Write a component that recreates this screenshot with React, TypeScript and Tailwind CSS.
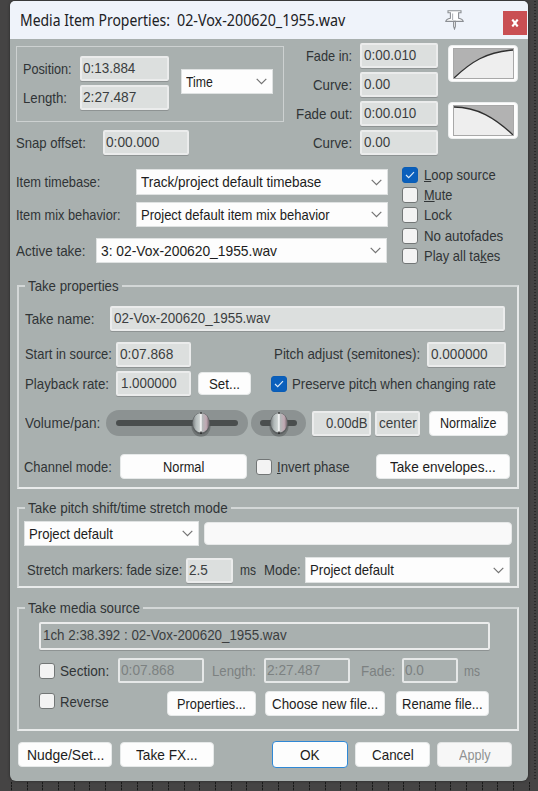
import { useLayoutEffect, useRef, useState } from "react";
import type { ReactNode } from "react";
import clsx from "clsx";

type TextProps = { w: number; children: ReactNode; className?: string };

// Condensed UI text: squeezed horizontally so that it fills exactly w pixels
function Text({ w, children, className }: TextProps) {
  const ref = useRef<HTMLSpanElement>(null);
  const [scale, setScale] = useState(1);

  useLayoutEffect(() => {
    if (ref.current) setScale(w / ref.current.offsetWidth);
  }, [w]);

  return (
    <span className={clsx("block shrink-0 whitespace-nowrap", className)} style={{ width: w }}>
      <span ref={ref} className="inline-block origin-left" style={{ transform: `scaleX(${scale})` }}>
        {children}
      </span>
    </span>
  );
}

type FieldProps = { value: string; w: number; className: string; disabled?: boolean; clear?: boolean };

function Field({ value, w, className, disabled, clear }: FieldProps) {
  return (
    <div
      className={clsx(
        "flex shrink-0 items-center rounded-[2px] border-2",
        disabled ? "border-[#e6e8e8] text-[#7c8181]" : "border-[#ebecec] text-[#3b3e40] shadow-[0_1px_0_#8e9393]",
        disabled || clear ? "bg-[#a9b0af]" : "bg-[#dcdfde]",
        className
      )}
    >
      <Text w={w} className="-mt-[1px]">{value}</Text>
    </div>
  );
}

function Select({ value, w, className }: { value: string; w: number; className: string }) {
  return (
    <div className={clsx("flex shrink-0 items-center justify-between border border-[#dfe2e2] bg-[#fdfdfd] pl-1 pr-[5px] text-[#1c1c20]", className)}>
      <Text w={w}>{value}</Text>
      <svg width="11" height="7" viewBox="0 0 11 7" fill="none" stroke="#737373" strokeWidth="1.2">
        <path d="M0.7 0.8 L5.5 5.6 L10.3 0.8" />
      </svg>
    </div>
  );
}

const plain = "border-[#e6e9e9] bg-[#fdfdfd] text-[#1c1c20]";

function Button({ label, w, className }: { label: string; w: number; className: string }) {
  return (
    <button className={clsx("flex h-[25px] shrink-0 items-center justify-center rounded-[4px] border", className)}>
      <Text w={w}>{label}</Text>
    </button>
  );
}

function Check({ checked, className }: { checked?: boolean; className?: string }) {
  return (
    <span
      className={clsx(
        "flex size-4 shrink-0 items-center justify-center rounded-[3px] border",
        checked ? "border-[#0a5cb5] bg-[#0a5fbc]" : "border-[#727676] bg-[#f3f3f3]",
        className
      )}
    >
      {checked && (
        <svg width="10" height="8" viewBox="0 0 10 8" fill="none" stroke="#dceaf8" strokeWidth="1.2">
          <path d="M1 4 L3.7 6.6 L9 1.2" />
        </svg>
      )}
    </span>
  );
}

function Group({ title, w, className, children }: { title: string; w: number; className: string; children: ReactNode }) {
  return (
    <fieldset className={clsx("ml-[7px] w-[502px] min-w-0 border-2 border-[#d3d7d7] border-r-[#e6e8e8] border-b-[#e9ebeb]", className)}>
      <legend className="ml-[6px] h-4 px-[3px] leading-4">
        <Text w={w}>{title}</Text>
      </legend>
      {children}
    </fieldset>
  );
}

function Knob({ className }: { className: string }) {
  return (
    <svg className={clsx("absolute top-[1px]", className)} width="22" height="27" viewBox="0 0 22 27">
      <defs>
        <linearGradient id="chrome" x1="0" x2="1">
          <stop offset="0" stopColor="#7d8283" />
          <stop offset="0.2" stopColor="#b3baba" />
          <stop offset="0.4" stopColor="#c9cfce" />
          <stop offset="0.5" stopColor="#ffffff" />
          <stop offset="0.58" stopColor="#b3b7b8" />
          <stop offset="0.82" stopColor="#c0a9b3" />
          <stop offset="1" stopColor="#75696f" />
        </linearGradient>
      </defs>
      <ellipse cx="11" cy="14.5" rx="9.8" ry="11.2" fill="#4c5050" opacity="0.45" />
      <ellipse cx="11" cy="12.5" rx="9" ry="10.8" fill="#5c6061" />
      <ellipse cx="11" cy="11.8" rx="8.2" ry="9.8" fill="url(#chrome)" />
      <path d="M11 1.2v1.8M11 20.5v2.5" stroke="#181818" strokeWidth="1.2" />
    </svg>
  );
}

function FadeCurve({ area, line }: { area: string; line: string }) {
  return (
    <div className="flex h-[37px] w-[70px] items-center justify-center rounded-[4px] border border-[#eceeee] bg-[#fdfdfd]">
      <svg width="61" height="31" viewBox="0 0 61 31">
        <rect x="0.5" y="0.5" width="60" height="30" fill="#b2b2b2" stroke="#a0a0a0" />
        <path d={area} fill="#eeeeee" />
        <path d={line} fill="none" stroke="#303030" strokeWidth="1.3" />
        <rect x="0.5" y="0.5" width="60" height="30" fill="none" stroke="#a8a8a8" />
      </svg>
    </div>
  );
}

function TitleBar() {
  return (
    <div className="flex h-[38px] items-center bg-[#eff3fa] pl-[10px] font-['Noto_Sans'] text-[16px] text-[#202124]">
      <Text w={150}>Media Item Properties:</Text>
      <Text w={168} className="ml-[7px]">02-Vox-200620_1955.wav</Text>
      <svg className="-mt-[1px] ml-[100px]" width="19" height="20" viewBox="0 0 19 20" fill="#fff" stroke="#8b8e93" strokeWidth="1.1">
        <path d="M3 0.7H16V2.8H13.6V8.2C15.8 8.6 17.8 9.5 18.2 11.4H0.8C1.2 9.5 3.2 8.6 5.4 8.2V2.8H3Z" />
        <path d="M8.6 11.4H10.4V16.5L9.5 19L8.6 16.5Z" />
        <path d="M7.6 3.4V10" stroke="#b0b3b8" />
      </svg>
      <div className="ml-auto mr-[1px] mt-[5px] flex size-6 items-center justify-center bg-[#c94f53]">
        <svg width="8" height="8" viewBox="0 0 8 8" stroke="#fff" strokeWidth="2.1">
          <path d="M1.3 0.5L6.7 7.5M6.7 0.5L1.3 7.5" />
        </svg>
      </div>
    </div>
  );
}

function FadeRow({ label, lw, value, vw, className }: { label: string; lw: number; value: string; vw: number; className?: string }) {
  return (
    <div className={clsx("flex items-center justify-end gap-2", className)}>
      <Text w={lw}>{label}</Text>
      <Field value={value} w={vw} className="h-[25px] w-[78px] pl-[2px]" />
    </div>
  );
}

function TopSection() {
  return (
    <div className="flex h-[130px] pt-[5px]">
      <div className="ml-[6px] w-[268px] shrink-0">
        <div className="mt-[2px] flex h-[76px] border border-[#cdd1d1] pl-[6px]">
          <div className="pt-[9px]">
            <div className="flex h-[25px] items-center">
              <Text w={49}>Position:</Text>
              <Field value="0:13.884" w={52} className="ml-2 h-[25px] w-[89px] pl-[1px]" />
            </div>
            <div className="mt-1 flex h-[25px] items-center">
              <Text w={44}>Length:</Text>
              <Field value="2:27.487" w={53} className="ml-[13px] h-[25px] w-[89px] pl-[1px]" />
            </div>
          </div>
          <Select value="Time" w={27} className="ml-3 mt-[22px] h-[25px] w-[92px]" />
        </div>
        <div className="mt-2 flex items-center">
          <Text w={70}>Snap offset:</Text>
          <Field value="0:00.000" w={53} className="ml-[17px] h-[25px] w-[86px] pl-[1px]" />
        </div>
      </div>
      <div className="-mt-[1px] w-[154px] shrink-0">
        <FadeRow label="Fade in:" lw={46} value="0:00.010" vw={52} />
        <FadeRow label="Curve:" lw={39} value="0.00" vw={26} className="mt-1" />
        <FadeRow label="Fade out:" lw={56} value="0:00.010" vw={52} className="mt-1" />
        <FadeRow label="Curve:" lw={39} value="0.00" vw={26} className="mt-1" />
      </div>
      <div className="ml-[10px] mt-[1px] flex flex-col gap-5">
        <FadeCurve area="M1 30C18 14 33 4 60 2V30Z" line="M1 30C18 14 33 4 60 2" />
        <FadeCurve area="M1 2C24 2 42 13 60 30H1Z" line="M1 2C24 2 42 13 60 30" />
      </div>
    </div>
  );
}

function ItemSection() {
  return (
    <div className="flex h-[109px]">
      <div className="ml-[6px] w-[372px]">
        <div className="flex items-center">
          <Text w={84}>Item timebase:</Text>
          <Select value="Track/project default timebase" w={180} className="ml-9 h-[26px] w-[252px]" />
        </div>
        <div className="mt-[7px] flex items-center">
          <Text w={105}>Item mix behavior:</Text>
          <Select value="Project default item mix behavior" w={189} className="ml-[15px] h-[25px] w-[252px]" />
        </div>
        <div className="mt-[11px] flex items-center">
          <Text w={70}>Active take:</Text>
          <Select value="3: 02-Vox-200620_1955.wav" w={176} className="ml-[10px] h-[25px] w-[291px]" />
        </div>
      </div>
      <div className="-mt-[4px] ml-[14px]">
        <div className="flex h-5 items-center gap-[6px]">
          <Check checked />
          <Text w={72}><u>L</u>oop source</Text>
        </div>
        <div className="flex h-5 items-center gap-[6px]">
          <Check />
          <Text w={28}><u>M</u>ute</Text>
        </div>
        <div className="flex h-5 items-center gap-[6px]">
          <Check />
          <Text w={28}>Lock</Text>
        </div>
        <div className="mt-[1px] flex h-5 items-center gap-[6px]">
          <Check />
          <Text w={79}>No autofades</Text>
        </div>
        <div className="flex h-5 items-center gap-[6px]">
          <Check />
          <Text w={76}>Play all ta<u>k</u>es</Text>
        </div>
      </div>
    </div>
  );
}

function TakeProperties() {
  return (
    <Group title="Take properties" w={91} className="h-[211px]">
      <div className="ml-[6px] mt-[12px] flex items-center">
        <Text w={70}>Take name:</Text>
        <Field value="02-Vox-200620_1955.wav" w={156} className="ml-[15px] h-[25px] w-[395px] pl-[2px]" />
      </div>
      <div className="ml-[6px] mt-[10px] flex items-center">
        <Text w={87}>Start in source:</Text>
        <Field value="0:07.868" w={53} className="ml-1 h-[25px] w-[75px] pl-[2px]" />
        <Text w={146} className="ml-[83px]">Pitch adjust (semitones):</Text>
        <Field value="0.000000" w={57} className="ml-[7px] mt-[1px] h-[25px] w-[79px] pl-[2px]" />
      </div>
      <div className="ml-[6px] mt-1 flex items-center">
        <Text w={84}>Playback rate:</Text>
        <Field value="1.000000" w={56} className="ml-[7px] h-[25px] w-[75px] pl-[3px]" />
        <Button label="Set..." w={31} className={clsx(plain, "ml-[7px] !h-[23px] w-[53px]")} />
        <Check checked className="ml-[20px]" />
        <Text w={204} className="ml-[5px]">Preserve pitc<u>h</u> when changing rate</Text>
      </div>
      <div className="ml-[6px] mt-[14px] flex items-center">
        <Text w={75}>Volume/pan:</Text>
        <div className="relative ml-[6px] h-[26px] w-[142px] rounded-full bg-[#8c9292] px-[10px] pt-[10px]">
          <div className="h-[6px] rounded-full bg-[#4a4e4e]" />
          <Knob className="left-[84px]" />
        </div>
        <div className="relative ml-[3px] h-[26px] w-[55px] rounded-full bg-[#8c9292] px-[9px] pt-[10px]">
          <div className="h-[6px] rounded-full bg-[#4a4e4e]" />
          <Knob className="left-[17px]" />
        </div>
        <Field value="0.00dB" w={42} className="ml-[6px] h-[25px] w-[59px] justify-end pr-[1px]" />
        <Field value="center" w={38} className="ml-1 h-[25px] w-[45px] justify-center" />
        <Button label="Normalize" w={57} className={clsx(plain, "ml-[9px] w-[79px]")} />
      </div>
      <div className="ml-[5px] mt-[18px] flex items-center">
        <Text w={88}>Channel mode:</Text>
        <Button label="Normal" w={41} className={clsx(plain, "ml-[8px] w-[127px]")} />
        <Check className="ml-[9px]" />
        <Text w={73} className="ml-[5px]"><u>I</u>nvert phase</Text>
        <Button label="Take envelopes..." w={106} className={clsx(plain, "ml-[26px] w-[134px]")} />
      </div>
    </Group>
  );
}

function StretchMode() {
  return (
    <Group title="Take pitch shift/time stretch mode" w={200} className="mt-[11px] h-[88px]">
      <div className="ml-[5px] mt-[5px] flex items-center">
        <Select value="Project default" w={84} className="h-[25px] w-[175px]" />
        <div className="ml-[5px] h-[23px] w-[308px] rounded-[4px] border border-[#e6e8e8] bg-[#f9f9f9]" />
      </div>
      <div className="ml-[8px] mt-[11px] flex items-center">
        <Text w={155}>Stretch markers: fade size:</Text>
        <Field value="2.5" w={19} className="ml-1 h-[25px] w-[47px] pl-[1px]" />
        <Text w={16} className="ml-[7px]">ms</Text>
        <Text w={37} className="ml-2">Mode:</Text>
        <Select value="Project default" w={84} className="ml-1 h-[26px] w-[205px]" />
      </div>
    </Group>
  );
}

function MediaSource() {
  return (
    <Group title="Take media source" w={112} className="mt-[12px] h-[131px]">
      <Field value="1ch 2:38.392 : 02-Vox-200620_1955.wav" w={244} clear className="ml-5 mt-[6px] h-[28px] w-[451px] pb-[2px] pl-[2px]" />
      <div className="ml-5 mt-2 flex items-center">
        <Check />
        <Text w={49} className="ml-[5px]">Section:</Text>
        <Field value="0:07.868" w={53} disabled className="ml-[9px] h-[25px] w-[86px] pl-[1px]" />
        <Text w={44} className="ml-2 text-[#7c8181]">Length:</Text>
        <Field value="2:27.487" w={53} disabled className="ml-[8px] h-[25px] w-[86px] pl-[1px]" />
        <Text w={34} className="ml-[11px] text-[#7c8181]">Fade:</Text>
        <Field value="0.0" w={19} disabled className="ml-[7px] h-[25px] w-[56px] pl-[1px]" />
        <Text w={16} className="ml-[6px] text-[#7c8181]">ms</Text>
      </div>
      <div className="ml-5 mt-2 flex">
        <Check className="mt-[2px]" />
        <Text w={49} className="ml-[5px] mt-[2px]">Reverse</Text>
        <Button label="Properties..." w={69} className={clsx(plain, "ml-[58px] w-[89px]")} />
        <Button label="Choose new file..." w={106} className={clsx(plain, "ml-[9px] w-[120px]")} />
        <Button label="Rename file..." w={81} className={clsx(plain, "ml-[11px] w-[93px]")} />
      </div>
    </Group>
  );
}

function Footer() {
  return (
    <div className="mt-[11px] flex pl-2">
      <Button label="Nudge/Set..." w={77} className={clsx(plain, "w-[94px]")} />
      <Button label="Take FX..." w={62} className={clsx(plain, "ml-2 w-[94px]")} />
      <Button label="OK" w={20} className="-mt-[1px] ml-[58px] !h-[27px] w-[76px] border-[#2f88d6] bg-[#fdfdfd] text-[#1c1c20]" />
      <Button label="Cancel" w={42} className={clsx(plain, "ml-[7px] w-[75px]")} />
      <Button label="Apply" w={32} className="ml-[7px] w-[75px] border-[#e2e4e4] bg-[#f7f7f7] text-[#8f9292]" />
    </div>
  );
}

export default function App() {
  return (
    <div className="flex h-[791px] w-[538px] flex-col overflow-hidden bg-[#454444] pl-[10px] pt-[1px]">
      <div className="flex">
        <div className="h-[780px] w-[518px] shrink-0 overflow-hidden rounded-t-[5px] rounded-b-[6px] bg-[#a9b0af] font-['Liberation_Sans'] text-[15px] leading-[18px] text-[#303436] shadow-[0_0_3px_#252525]">
          <TitleBar />
          <TopSection />
          <ItemSection />
          <TakeProperties />
          <StretchMode />
          <MediaSource />
          <Footer />
        </div>
        <div className="ml-[6px] w-[2px] bg-[repeating-linear-gradient(#2a2a2a_0_1px,#454444_1px_3px)]" />
      </div>
      <div className="mt-[1px] flex h-[9px] gap-[14.7px] pl-[1px]">
        {Array.from({ length: 34 }, (_, i) => (
          <div key={i} className="w-[1px] shrink-0 bg-[repeating-linear-gradient(#191919_0_2px,#383838_2px_3px)]" />
        ))}
      </div>
    </div>
  );
}
